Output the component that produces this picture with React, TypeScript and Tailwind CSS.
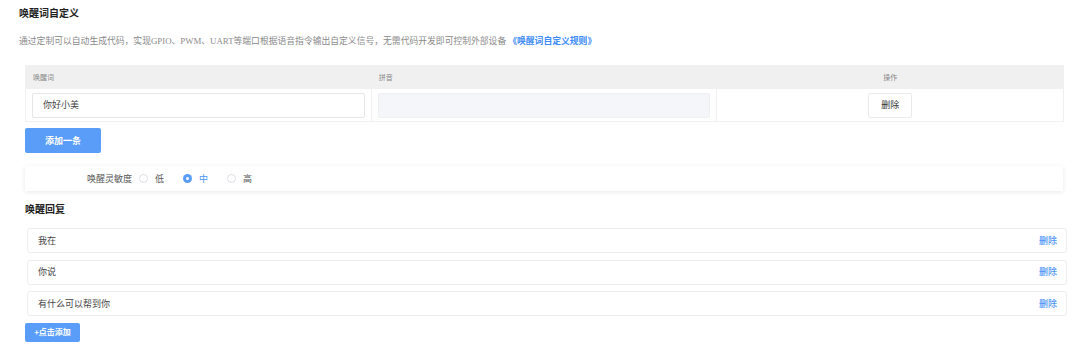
import { useState } from 'react'

const replies = ['我在', '你说', '有什么可以帮到你']
const levels = ['低', '中', '高']

function Radio({ label, checked }: { label: string; checked: boolean }) {
  return (
    <div className="flex items-center">
      {checked ? (
        <span className="w-[9px] h-[9px] rounded-full bg-[#5a9df8] flex items-center justify-center">
          <span className="w-[3px] h-[3px] rounded-full bg-white" />
        </span>
      ) : (
        <span className="w-[9px] h-[9px] rounded-full border border-[#dcdfe6] bg-white" />
      )}
      <span className={`ml-[7px] text-[9px] leading-[12px] ${checked ? 'text-[#4b94f6]' : 'text-[#555]'}`}>{label}</span>
    </div>
  )
}

export default function App() {
  const [level] = useState('中')

  return (
    <div
      className="w-[1080px] h-[349px] bg-white overflow-hidden"
      style={{ fontFamily: '"Noto Sans CJK SC", "Noto Sans", sans-serif' }}
    >
      <div className="pl-[19px] pt-[6px]">
        <h1 className="text-[10px] leading-[14px] font-bold text-[#1f1f1f]">唤醒词自定义</h1>
        <p
          className="mt-[15px] text-[8.8px] leading-[12px] text-[#8a8a8a]"
          style={{ fontFamily: '"Liberation Serif", "Noto Sans CJK SC", serif' }}
        >
          通过定制可以自动生成代码，实现GPIO、PWM、UART等端口根据语音指令输出自定义信号，无需代码开发即可控制外部设备
          <span className="text-[#3d8cf5] font-bold ml-[2px]" style={{ fontFamily: '"Noto Sans CJK SC", sans-serif' }}>
            《唤醒词自定义规则》
          </span>
        </p>
      </div>

      <div className="pl-[25px]">
        {/* wake word table */}
        <div className="mt-[18px] w-[1039px] border border-[#f0f0f0]">
          <div className="grid grid-cols-3 h-[23px] bg-[#f0f0f0] text-[7px] text-[#888] items-center">
            <div className="pl-[7px]">唤醒词</div>
            <div className="pl-[7px]">拼音</div>
            <div className="text-center">操作</div>
          </div>
          <div className="grid grid-cols-3 h-[32px]">
            <div className="flex items-center px-[6px] border-r border-[#f0f0f0]">
              <div className="w-full h-[25px] border border-[#e6e6e6] rounded-[2px] flex items-center pl-[10px] text-[9px] text-[#444]">
                你好小美
              </div>
            </div>
            <div className="flex items-center px-[6px] border-r border-[#f0f0f0]">
              <div className="w-full h-[25px] border border-[#eef0f3] rounded-[2px] bg-[#f5f6f9]" />
            </div>
            <div className="flex items-center justify-center">
              <button className="w-[44px] h-[25px] border border-[#ebebeb] rounded-[2px] bg-white text-[9px] text-[#333]">
                删除
              </button>
            </div>
          </div>
        </div>

        <button className="mt-[6px] w-[76px] h-[25px] rounded-[2px] bg-[#5a9df8] text-white text-[9px] font-bold">
          添加一条
        </button>

        {/* sensitivity */}
        <div className="mt-[13px] w-[1038px] h-[25px] bg-white shadow-[0_1px_5px_rgba(0,0,0,0.09)] flex items-center pl-[62px]">
          <span className="text-[9px] text-[#555] mr-[7px]">唤醒灵敏度</span>
          <div className="flex items-center gap-[19px]">
            {levels.map(l => (
              <Radio key={l} label={l} checked={l === level} />
            ))}
          </div>
        </div>

        <h2 className="mt-[11px] text-[10px] leading-[14px] font-bold text-[#1f1f1f]">唤醒回复</h2>

        <div className="mt-[12px] ml-[2px] w-[1040px] flex flex-col gap-[6.5px]">
          {replies.map(r => (
            <div
              key={r}
              className="h-[25px] border border-[#eeeeee] rounded-[3px] flex items-center justify-between pl-[10px] pr-[9px]"
            >
              <span className="text-[9px] text-[#444]">{r}</span>
              <span className="text-[9px] text-[#4b94f6] font-medium">删除</span>
            </div>
          ))}
        </div>

        <button className="mt-[4px] w-[55px] h-[19px] rounded-[2px] bg-[#5a9df8] text-white text-[8px] font-bold">
          +点击添加
        </button>
      </div>
    </div>
  )
}
